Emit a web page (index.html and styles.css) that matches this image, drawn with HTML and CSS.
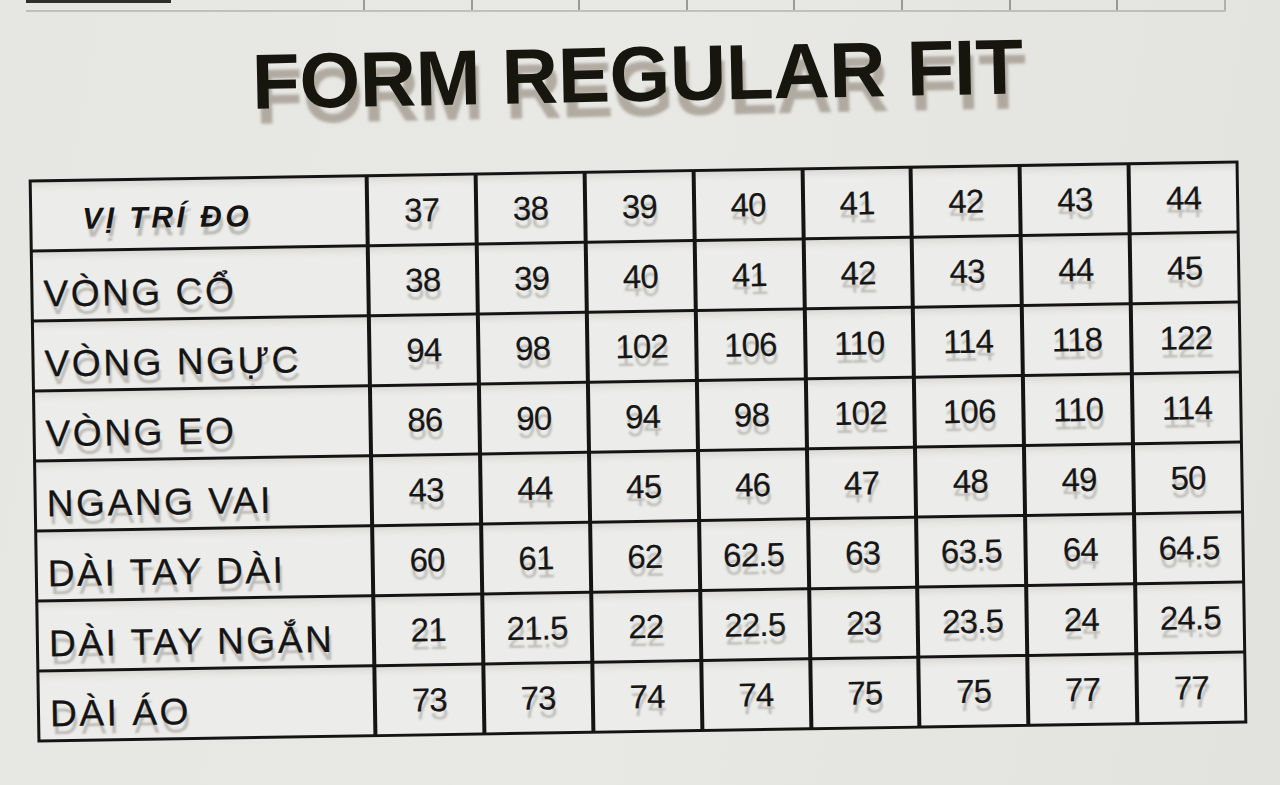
FILE: index.html
```html
<!DOCTYPE html>
<html lang="vi">
<head>
<meta charset="utf-8">
<title>Form Regular Fit</title>
<link rel="stylesheet" href="styles.css">
</head>
<body>
<div class="page">
  <div class="prev">
    <div class="pcell first"><div class="stub"></div></div>
    <div class="pcell"></div><div class="pcell"></div><div class="pcell"></div><div class="pcell"></div>
    <div class="pcell"></div><div class="pcell"></div><div class="pcell"></div><div class="pcell last"></div>
  </div>

  <h1 class="title">FORM REGULAR FIT</h1>

  <div class="chart">
    <div class="cell label head">VỊ TRÍ ĐO</div>
    <div class="cell num">37</div><div class="cell num">38</div><div class="cell num">39</div><div class="cell num">40</div>
    <div class="cell num">41</div><div class="cell num">42</div><div class="cell num">43</div><div class="cell num">44</div>

    <div class="cell label">VÒNG CỔ</div>
    <div class="cell num">38</div><div class="cell num">39</div><div class="cell num">40</div><div class="cell num">41</div>
    <div class="cell num">42</div><div class="cell num">43</div><div class="cell num">44</div><div class="cell num">45</div>

    <div class="cell label">VÒNG NGỰC</div>
    <div class="cell num">94</div><div class="cell num">98</div><div class="cell num">102</div><div class="cell num">106</div>
    <div class="cell num">110</div><div class="cell num">114</div><div class="cell num">118</div><div class="cell num">122</div>

    <div class="cell label">VÒNG EO</div>
    <div class="cell num">86</div><div class="cell num">90</div><div class="cell num">94</div><div class="cell num">98</div>
    <div class="cell num">102</div><div class="cell num">106</div><div class="cell num">110</div><div class="cell num">114</div>

    <div class="cell label">NGANG VAI</div>
    <div class="cell num">43</div><div class="cell num">44</div><div class="cell num">45</div><div class="cell num">46</div>
    <div class="cell num">47</div><div class="cell num">48</div><div class="cell num">49</div><div class="cell num">50</div>

    <div class="cell label">DÀI TAY DÀI</div>
    <div class="cell num">60</div><div class="cell num">61</div><div class="cell num">62</div><div class="cell num">62.5</div>
    <div class="cell num">63</div><div class="cell num">63.5</div><div class="cell num">64</div><div class="cell num">64.5</div>

    <div class="cell label">DÀI TAY NGẮN</div>
    <div class="cell num">21</div><div class="cell num">21.5</div><div class="cell num">22</div><div class="cell num">22.5</div>
    <div class="cell num">23</div><div class="cell num">23.5</div><div class="cell num">24</div><div class="cell num">24.5</div>

    <div class="cell label">DÀI ÁO</div>
    <div class="cell num">73</div><div class="cell num">73</div><div class="cell num">74</div><div class="cell num">74</div>
    <div class="cell num">75</div><div class="cell num">75</div><div class="cell num">77</div><div class="cell num">77</div>
  </div>
</div>
</body>
</html>
```

FILE: styles.css
```css
html, body {
  margin: 0;
  padding: 0;
}

body {
  width: 1280px;
  height: 785px;
  overflow: hidden;
  background: linear-gradient(100deg, #e6e6e3 0%, #e8e8e5 45%, #e2e2df 100%);
  font-family: "Liberation Sans", Arial, sans-serif;
  color: #161616;
}

.page {
  display: flex;
  flex-direction: column;
  align-items: flex-start;
}

/* faint bottom edge of the previous chart */
.prev {
  display: flex;
  margin-left: 26px;
  height: 10px;
  width: 1200px;
  border-bottom: 2px solid rgba(90, 90, 88, 0.28);
  filter: blur(0.7px);
}

.pcell {
  width: 106px;
  border-right: 2px solid rgba(60, 60, 58, 0.45);
}

.pcell.first {
  width: 338px;
}

.stub {
  width: 145px;
  height: 3px;
  background: #2e2e2c;
}

.pcell.last {
  border-right: 2px solid rgba(60, 60, 58, 0.3);
}

.title {
  align-self: center;
  margin: 23px 0 0 -6px;
  font-size: 78px;
  line-height: 78px;
  font-weight: 700;
  letter-spacing: -0.3px;
  color: #16160f;
  text-shadow: 3px 15px 3px rgba(95, 80, 60, 0.4);
  transform: rotate(-1.15deg);
}

.chart {
  margin: 57px 0 0 33px;
  width: 1210px;
  display: grid;
  grid-template-columns: 333px repeat(8, 1fr);
  grid-auto-rows: 67px;
  column-gap: 4px;
  row-gap: 3px;
  padding: 3px;
  box-sizing: border-box;
  background: #141414;
  transform: rotate(-0.9deg);
}

.cell {
  background: #ececea;
  display: flex;
  align-items: center;
  box-shadow: inset 0 9px 7px -6px rgba(120, 115, 105, 0.18);
}

.label {
  padding: 16px 0 0 10px;
  box-sizing: border-box;
  font-size: 37px;
  letter-spacing: 2.6px;
  color: #141414;
  -webkit-text-stroke: 0.3px #141414;
  text-shadow: 2px 8px 2px rgba(90, 85, 75, 0.32);
}

.label.head {
  padding: 6px 0 0 50px;
  font-size: 30px;
  font-weight: 700;
  font-style: italic;
  letter-spacing: 3.5px;
  -webkit-text-stroke: 0;
}

.num {
  justify-content: center;
  font-size: 33px;
  letter-spacing: -0.8px;
  color: #161616;
  -webkit-text-stroke: 0.2px #161616;
  text-shadow: 1px 8px 2px rgba(90, 85, 75, 0.3);
}
```
